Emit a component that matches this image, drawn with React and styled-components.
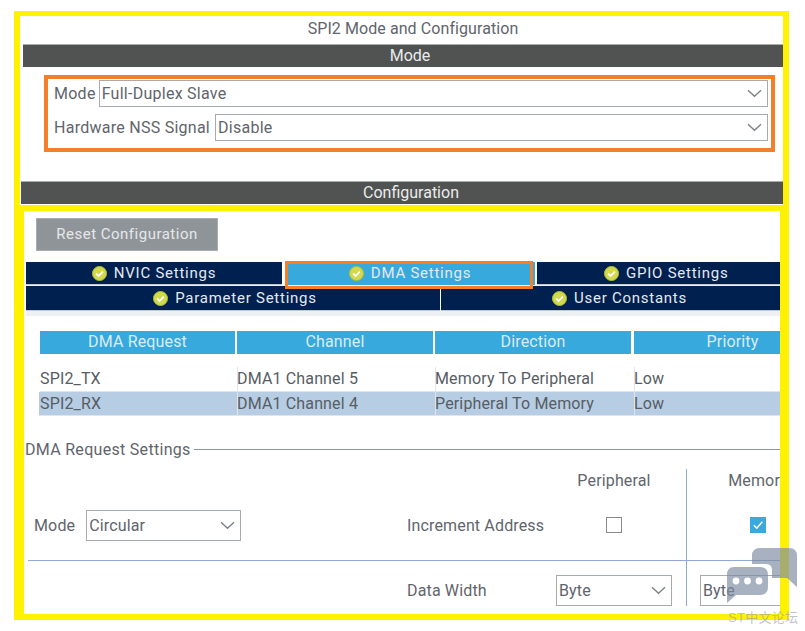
import React from 'react'
import styled, { createGlobalStyle } from 'styled-components'

const GlobalStyle = createGlobalStyle`
  html, body {
    margin: 0;
    padding: 0;
    background: #fff;
  }
  * { box-sizing: border-box; }
`

const Page = styled.div`
  position: relative;
  width: 805px;
  height: 631px;
  padding: 11px 0 0 14px;
  overflow: hidden;
  font-family: Roboto, "Liberation Sans", sans-serif;
  font-size: 16px;
  letter-spacing: 0.15px;
  color: #5f656c;
`

const Frame = styled.div`
  width: 775px;
  height: 609px;
  border: 6px solid #fff200;
  border-top-width: 5px;
  display: flex;
  flex-direction: column;
`

const Title = styled.div`
  height: 28px;
  line-height: 25px;
  text-align: center;
  padding-left: 23px;
  letter-spacing: 0.08px;
`

const SectionBar = styled.div`
  height: ${p => p.$h}px;
  margin-left: ${p => p.$left}px;
  padding-left: ${p => 14 - p.$left * 2 + 6}px;
  background: #515352;
  border-top: 1px solid #a9adad;
  color: #e9ecec;
  line-height: 22px;
  text-align: center;
  letter-spacing: 0;
`

const ModeBox = styled.div`
  margin: 8px 8px 0 24px;
  height: 77px;
  border: 4px solid #f57f29;
  padding: 1px 3px 0 6px;
  display: flex;
  flex-direction: column;
  gap: 7px;
  letter-spacing: 0.26px;
`

const FieldRow = styled.div`
  display: flex;
  align-items: center;
  gap: ${p => p.$gap || 4}px;
  white-space: nowrap;
`

const SelectBox = styled.div`
  flex: ${p => (p.$width ? 'none' : 1)};
  width: ${p => (p.$width ? `${p.$width}px` : 'auto')};
  height: ${p => p.$h || 27}px;
  border: 1.5px solid #a6abaf;
  background: #fff;
  padding: 0 5px 0 2px;
  display: flex;
  align-items: center;
  justify-content: space-between;
  flex-shrink: 0;
`

const ConfigBar = styled(SectionBar)`
  margin-top: 29px;
`

const Panel = styled.div`
  margin: 1px -2px 0 -1px;
  height: 410px;
  border: 5px solid #fff200;
  border-top-width: 6px;
  border-bottom: 0;
  overflow: hidden;
`

const ResetButton = styled.button`
  display: block;
  margin: 7px 0 0 12px;
  width: 182px;
  height: 33px;
  border: 1px solid #a9adb0;
  background: #8f9499;
  color: #e6e8ea;
  font: inherit;
  font-size: 15px;
  letter-spacing: 0.5px;
`

const Tabs = styled.div`
  margin: 11px 0 0 2px;
  background: #eef0f3;
  padding-bottom: 5px;
`

const TabRow = styled.div`
  display: grid;
  grid-template-columns: ${p => p.$cols};
  height: ${p => p.$h}px;
  background: #fff;
  margin-bottom: ${p => p.$mb || 0}px;
`

const Tab = styled.div`
  position: relative;
  display: flex;
  align-items: center;
  justify-content: center;
  gap: 7px;
  padding-left: ${p => p.$shift || 0}px;
  background: ${p => (p.$active ? '#38a9dc' : '#002050')};
  color: #e4e9ef;
  font-size: 15px;
  letter-spacing: 0.75px;
  box-shadow: ${p => (p.$active ? 'none' : 'inset 0 -1px 0 #c2c8d0')};

  ${p => p.$active && `
    &::after {
      content: '';
      position: absolute;
      z-index: 1;
      inset: -1px 2px -4px 0;
      border: 3px solid #f57f29;
    }
  `}
`

const Table = styled.div`
  margin: 15px 0 0 16px;
  display: grid;
  grid-template-columns: 197px 198px 199px 197px;
`

const HeadCell = styled.div`
  height: 23px;
  margin-bottom: 13px;
  background: #38a9dc;
  color: #dcebf5;
  line-height: 22px;
  text-align: center;
  border-right: ${p => p.$gap}px solid #fff;
`

const BodyCell = styled.div`
  height: ${p => p.$h}px;
  line-height: ${p => p.$line}px;
  background: ${p => (p.$selected ? '#b6cde3' : '#fff')};
  box-shadow: ${p => (p.$first ? 'none' : 'inset 1px 0 0 #dfe5ec')};
  border-bottom: 1px solid #dfe5ec;
  margin-left: ${p => (p.$first && p.$selected ? -1 : 0)}px;
  padding-left: ${p => (p.$first && p.$selected ? 1 : 0)}px;
  color: #575d64;
`

const Legend = styled.div`
  margin: 24px 0 0 1px;
  height: 20px;
  display: flex;
  align-items: center;
  gap: 3px;
  white-space: nowrap;
  letter-spacing: 0.3px;

  &::after {
    content: '';
    flex: 1;
    height: 1px;
    background: #8e959c;
  }
`

const SettingsGrid = styled.div`
  margin: 9px 0 0 4px;
  width: 788px;
  display: grid;
  grid-template-columns: 379px 149px 130px 130px;
  grid-template-rows: 22px 69px 1px 45px;
`

const Cell = styled.div`
  display: flex;
  align-items: center;
  white-space: nowrap;
  padding: ${p => p.$pt || 0}px 0 0 ${p => p.$pl || 0}px;
  grid-column: ${p => p.$col || 'auto'};
`

const ValueCell = styled(Cell)`
  justify-content: center;
  padding-right: 14px;
`

const MemoryCell = styled(Cell)`
  border-left: 1px solid #8fa8d5;
  padding-left: 13px;
  justify-content: ${p => (p.$start ? 'flex-start' : 'center')};
`

const Rule = styled.div`
  grid-column: 1 / -1;
  background: #8fa8d5;
`

const CheckBox = styled.span`
  width: 16px;
  height: 16px;
  display: flex;
  align-items: center;
  justify-content: center;
  border: ${p => (p.$checked ? 0 : '1.5px solid #8a8a8a')};
  background: ${p => (p.$checked ? '#3aa9de' : '#fff')};
`

const Watermark = styled.svg`
  position: absolute;
  left: 720px;
  top: 545px;
  width: 80px;
  height: 62px;
`

const WatermarkText = styled.span`
  position: absolute;
  left: 728px;
  top: 607px;
  color: rgba(150, 155, 160, 0.6);
  font-family: "Liberation Sans", "Noto Sans CJK SC", sans-serif;
  font-size: 13px;
  letter-spacing: 0.3px;
  white-space: nowrap;
`

const Chevron = () => (
  <svg width="15" height="9" viewBox="0 0 15 9" fill="none">
    <path d="M1 1.2 7.5 7.2 14 1.2" stroke="#7c8288" strokeWidth="1.4" />
  </svg>
)

const OkIcon = () => (
  <svg width="15" height="15" viewBox="0 0 15 15">
    <circle cx="7.5" cy="7.5" r="7" fill="#d3d94e" stroke="#b3c02c" strokeWidth="1" />
    <path d="M4.2 7.6 6.6 10 10.8 5.6" fill="none" stroke="#fff" strokeWidth="1.8" />
  </svg>
)

const Select = ({ value, width, h }) => (
  <SelectBox $width={width} $h={h}>
    {value}
    <Chevron />
  </SelectBox>
)

const rows = [
  ['SPI2_TX', 'DMA1 Channel 5', 'Memory To Peripheral', 'Low'],
  ['SPI2_RX', 'DMA1 Channel 4', 'Peripheral To Memory', 'Low'],
]

const heads = [
  ['DMA Request', 2],
  ['Channel', 2],
  ['Direction', 3],
  ['Priority', 0],
]

export default function App() {
  return (
    <Page>
      <GlobalStyle />
      <Frame>
        <Title>SPI2 Mode and Configuration</Title>
        <SectionBar $h={23} $left={3}>Mode</SectionBar>
        <ModeBox>
          <FieldRow $gap={3}>
            Mode
            <Select value="Full-Duplex Slave" />
          </FieldRow>
          <FieldRow $gap={5}>
            Hardware NSS Signal
            <Select value="Disable" />
          </FieldRow>
        </ModeBox>
        <ConfigBar $h={23} $left={1}>Configuration</ConfigBar>
        <Panel>
          <ResetButton>Reset Configuration</ResetButton>
          <Tabs>
            <TabRow $cols="256px 3px 250px 1.5px 1fr" $h={23} $mb={1}>
              <Tab><OkIcon />NVIC Settings</Tab>
              <span />
              <Tab $active><OkIcon />DMA Settings</Tab>
              <span />
              <Tab $shift={16}><OkIcon />GPIO Settings</Tab>
            </TabRow>
            <TabRow $cols="414px 1px 1fr" $h={25}>
              <Tab $shift={4}><OkIcon />Parameter Settings</Tab>
              <span />
              <Tab $shift={18}><OkIcon />User Constants</Tab>
            </TabRow>
          </Tabs>
          <Table>
            {heads.map(([name, gap]) => (
              <HeadCell key={name} $gap={gap}>{name}</HeadCell>
            ))}
            {rows.map((row, i) =>
              row.map((text, j) => (
                <BodyCell
                  key={text + i}
                  $h={i === 0 ? 25 : 24}
                  $line={23}
                  $selected={i === 1}
                  $first={j === 0}
                >
                  {text}
                </BodyCell>
              ))
            )}
          </Table>
          <Legend>DMA Request Settings</Legend>
          <SettingsGrid>
            <Cell $col="1 / 3" />
            <ValueCell $pt={1}>Peripheral</ValueCell>
            <MemoryCell $pt={1}>Memory</MemoryCell>

            <Cell $pl={6}>
              <FieldRow $gap={11}>
                Mode
                <Select value="Circular" width={155} h={31} />
              </FieldRow>
            </Cell>
            <Cell>Increment Address</Cell>
            <ValueCell><CheckBox /></ValueCell>
            <MemoryCell>
              <CheckBox $checked>
                <svg width="12" height="12" viewBox="0 0 12 12">
                  <path d="M1.8 6.2 4.8 9.2 10.4 2.8" fill="none" stroke="#fff" strokeWidth="1.5" />
                </svg>
              </CheckBox>
            </MemoryCell>

            <Rule />

            <Cell />
            <Cell $pt={14}>Data Width</Cell>
            <ValueCell $pt={14}><Select value="Byte" width={116} h={31} /></ValueCell>
            <MemoryCell $start $pt={14}><Select value="Byte" width={116} h={31} /></MemoryCell>
          </SettingsGrid>
        </Panel>
      </Frame>
      <Watermark viewBox="720 545 80 62">
        <path
          d="M760 548H789Q797 548 797 556V587L787 578H772V570Q772 564 766 564H752V556Q752 548 760 548Z"
          fill="rgba(125,140,160,0.68)"
        />
        <path
          d="M734 567H760Q768 567 768 575V587Q768 595 760 595H736L727 603V575Q727 567 734 567Z"
          fill="rgba(125,140,160,0.68)"
        />
        <circle cx="736" cy="581" r="3.4" fill="#fff" />
        <circle cx="747.5" cy="581" r="3.4" fill="#fff" />
        <circle cx="759" cy="581" r="3.4" fill="#fff" />
      </Watermark>
      <WatermarkText>ST中文论坛</WatermarkText>
    </Page>
  )
}
